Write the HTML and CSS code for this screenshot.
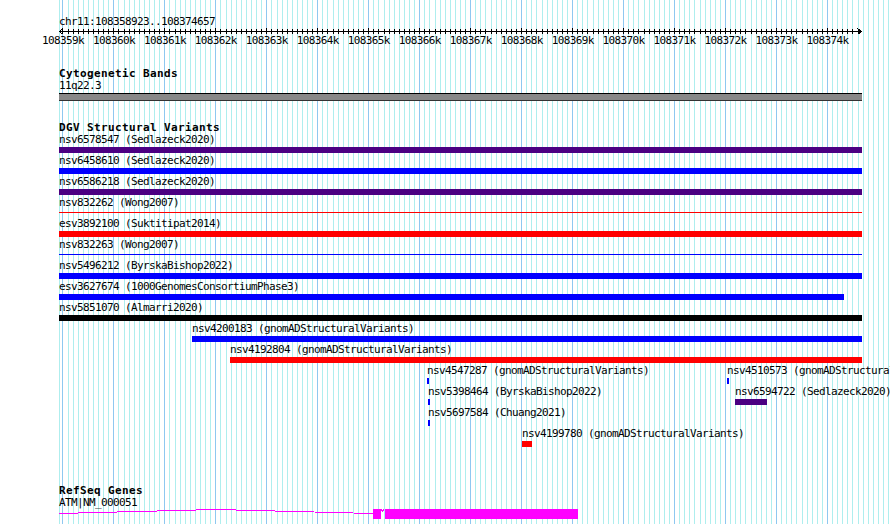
FILE: index.html
```html
<!DOCTYPE html>
<html>

<head>
    <meta name='viewport' content='width=device-width, initial-scale=1'>
    <title>chr11:108358923..108374657</title>
    <link rel="stylesheet" href="styles.css">
</head>

<body>
    <div class="browser">
        <svg class="grid" id="grid" width="831" height="524" shape-rendering="crispEdges"></svg>

        <div class="panel">
            <div class="ruler">
                <div class="coords">chr11:108358923..108374657</div>
                <svg class="axis" width="804" height="6" shape-rendering="crispEdges">
                    <rect x="0" y="3" width="803" height="1" />
                    <g id="ticks"></g>
                    <polyline points="4,0.5 0.5,3.5 4,6.5" />
                    <polyline points="798.5,0.5 802.5,3.5 798.5,6.5" />
                </svg>
                <div class="tick-labels">
                    <span class="tick" style="left:3.9px">108359k</span>
                    <span class="tick" style="left:54.9px">108360k</span>
                    <span class="tick" style="left:105.9px">108361k</span>
                    <span class="tick" style="left:156.8px">108362k</span>
                    <span class="tick" style="left:207.8px">108363k</span>
                    <span class="tick" style="left:258.8px">108364k</span>
                    <span class="tick" style="left:309.8px">108365k</span>
                    <span class="tick" style="left:360.7px">108366k</span>
                    <span class="tick" style="left:411.7px">108367k</span>
                    <span class="tick" style="left:462.7px">108368k</span>
                    <span class="tick" style="left:513.7px">108369k</span>
                    <span class="tick" style="left:564.6px">108370k</span>
                    <span class="tick" style="left:615.6px">108371k</span>
                    <span class="tick" style="left:666.6px">108372k</span>
                    <span class="tick" style="left:717.5px">108373k</span>
                    <span class="tick" style="left:768.5px">108374k</span>
                </div>
            </div>

            <section class="track cyto">
                <div class="track-title">Cytogenetic Bands</div>
                <div class="band-name">11q22.3</div>
                <div class="band"></div>
            </section>

            <section class="track dgv">
                <div class="track-title">DGV Structural Variants</div>

                <div class="lane">
                    <div class="feature" style="left:0;width:803px">
                        <span class="label">nsv6578547 (Sedlazeck2020)</span>
                        <div class="bar purple"></div>
                    </div>
                </div>
                <div class="lane">
                    <div class="feature" style="left:0;width:803px">
                        <span class="label">nsv6458610 (Sedlazeck2020)</span>
                        <div class="bar blue"></div>
                    </div>
                </div>
                <div class="lane">
                    <div class="feature" style="left:0;width:803px">
                        <span class="label">nsv6586218 (Sedlazeck2020)</span>
                        <div class="bar purple"></div>
                    </div>
                </div>
                <div class="lane">
                    <div class="feature" style="left:0;width:803px">
                        <span class="label">nsv832262 (Wong2007)</span>
                        <div class="bar thin red"></div>
                    </div>
                </div>
                <div class="lane">
                    <div class="feature" style="left:0;width:803px">
                        <span class="label">esv3892100 (Suktitipat2014)</span>
                        <div class="bar red"></div>
                    </div>
                </div>
                <div class="lane">
                    <div class="feature" style="left:0;width:803px">
                        <span class="label">nsv832263 (Wong2007)</span>
                        <div class="bar thin blue"></div>
                    </div>
                </div>
                <div class="lane">
                    <div class="feature" style="left:0;width:803px">
                        <span class="label">nsv5496212 (ByrskaBishop2022)</span>
                        <div class="bar blue"></div>
                    </div>
                </div>
                <div class="lane">
                    <div class="feature" style="left:0;width:785px">
                        <span class="label">esv3627674 (1000GenomesConsortiumPhase3)</span>
                        <div class="bar blue"></div>
                    </div>
                </div>
                <div class="lane">
                    <div class="feature" style="left:0;width:803px">
                        <span class="label">nsv5851070 (Almarri2020)</span>
                        <div class="bar black"></div>
                    </div>
                </div>
                <div class="lane">
                    <div class="feature" style="left:133px;width:670px">
                        <span class="label">nsv4200183 (gnomADStructuralVariants)</span>
                        <div class="bar blue"></div>
                    </div>
                </div>
                <div class="lane">
                    <div class="feature" style="left:171px;width:632px">
                        <span class="label">nsv4192804 (gnomADStructuralVariants)</span>
                        <div class="bar red"></div>
                    </div>
                </div>
                <div class="lane">
                    <div class="feature" style="left:368px;width:2px">
                        <span class="label">nsv4547287 (gnomADStructuralVariants)</span>
                        <div class="bar blue"></div>
                    </div>
                    <div class="feature" style="left:668px;width:2px">
                        <span class="label">nsv4510573 (gnomADStructuralVariants)</span>
                        <div class="bar blue"></div>
                    </div>
                </div>
                <div class="lane">
                    <div class="feature" style="left:369px;width:2px">
                        <span class="label">nsv5398464 (ByrskaBishop2022)</span>
                        <div class="bar blue"></div>
                    </div>
                    <div class="feature" style="left:676px;width:32px">
                        <span class="label">nsv6594722 (Sedlazeck2020)</span>
                        <div class="bar purple"></div>
                    </div>
                </div>
                <div class="lane">
                    <div class="feature" style="left:369px;width:2px">
                        <span class="label">nsv5697584 (Chuang2021)</span>
                        <div class="bar blue"></div>
                    </div>
                </div>
                <div class="lane">
                    <div class="feature" style="left:463px;width:10px">
                        <span class="label">nsv4199780 (gnomADStructuralVariants)</span>
                        <div class="bar red"></div>
                    </div>
                </div>
            </section>

            <section class="track refseq">
                <div class="track-title">RefSeq Genes</div>
                <div class="gene-name">ATM|NM_000051</div>
                <svg class="gene" width="803" height="12" shape-rendering="crispEdges">
                    <polyline class="intron" points="0,5.5 157,1.5 314,5.5" />
                    <polyline class="intron" points="322,1.5 323.5,3 325,1.5" />
                    <rect class="exon" x="314" y="1" width="8" height="10" />
                    <rect class="exon" x="326" y="1" width="193" height="10" />
                </svg>
            </section>
        </div>
    </div>

    <script src="grid.js"></script>
</body>

</html>
```

FILE: styles.css
```css
html,
body {
    margin: 0;
    background: #fff;
}

body {
    font-family: "DejaVu Sans Mono", "Liberation Mono", monospace;
    font-size: 11px;
    letter-spacing: -0.62px;
    color: #000;
}

.browser {
    position: relative;
    width: 890px;
    height: 524px;
    overflow: hidden;
}

.grid {
    position: absolute;
    top: 0;
    left: 59px;
}

.grid .minor {
    fill: #aeeeee;
}

.grid .major {
    fill: #8ec8f0;
}

.panel {
    position: relative;
    margin-left: 59px;
    width: 803px;
}

/* ruler */
.ruler {
    padding-top: 15px;
}

.coords {
    line-height: 13px;
    white-space: nowrap;
}

.axis {
    display: block;
    fill: #000;
}

.axis polyline {
    fill: none;
    stroke: #000;
    stroke-width: 1;
}

.tick-labels {
    position: relative;
    height: 13px;
    line-height: 13px;
}

.tick {
    position: absolute;
    top: 0;
    transform: translateX(-50%);
    white-space: nowrap;
}

/* tracks */
.track-title {
    font-weight: bold;
    letter-spacing: 0.38px;
    line-height: 13px;
    white-space: nowrap;
}

.cyto {
    margin-top: 20px;
}

.band-name {
    line-height: 12px;
}

.band {
    margin-top: 1px;
    height: 6px;
    background: #888;
    border-top: 1px solid #000;
    border-bottom: 1px solid #333;
}

.dgv {
    margin-top: 20px;
}

.lane {
    position: relative;
    height: 21px;
}

.feature {
    position: absolute;
    top: 0;
}

.label {
    display: block;
    line-height: 12px;
    white-space: nowrap;
}

.bar {
    margin-top: 1px;
    height: 6px;
}

.bar.thin {
    height: 1px;
    margin-top: 3px;
    margin-bottom: 2px;
}

.purple {
    background: #4b0082;
}

.blue {
    background: #0000ff;
}

.red {
    background: #ff0000;
}

.black {
    background: #000;
}

.refseq {
    margin-top: 35px;
}

.gene-name {
    line-height: 11px;
    white-space: nowrap;
}

.gene {
    display: block;
}

.gene .intron {
    fill: none;
    stroke: #ff00ff;
    stroke-width: 1;
}

.gene .exon {
    fill: #ff00ff;
}
```

FILE: grid.js
```js
var START = 108358923;
var END = 108374657;
var SCALE = 802 / (END - START);
var SVG_NS = 'http://www.w3.org/2000/svg';

function toX(pos) {
    return Math.floor((pos - START) * SCALE);
}

function addRect(parent, x, y, w, h, cls) {
    var r = document.createElementNS(SVG_NS, 'rect');
    r.setAttribute('x', x);
    r.setAttribute('y', y);
    r.setAttribute('width', w);
    r.setAttribute('height', h);
    if (cls) r.setAttribute('class', cls);
    parent.appendChild(r);
}

// background grid, one line every 100bp, darker every 1kb
var grid = document.getElementById('grid');
addRect(grid, 0, 0, 1, 524, 'minor');
for (var pos = Math.ceil(START / 100) * 100; toX(pos) < 831; pos += 100) {
    var major = pos % 1000 == 0 && pos <= END;
    addRect(grid, toX(pos), 0, 1, 524, major ? 'major' : 'minor');
}

// ruler ticks
var ticks = document.getElementById('ticks');
for (var p = Math.ceil(START / 100) * 100; p <= END; p += 100) {
    if (p % 1000 == 0) {
        addRect(ticks, toX(p), 0, 1, 6);
    } else {
        addRect(ticks, toX(p), 1, 1, 5);
    }
}
```
